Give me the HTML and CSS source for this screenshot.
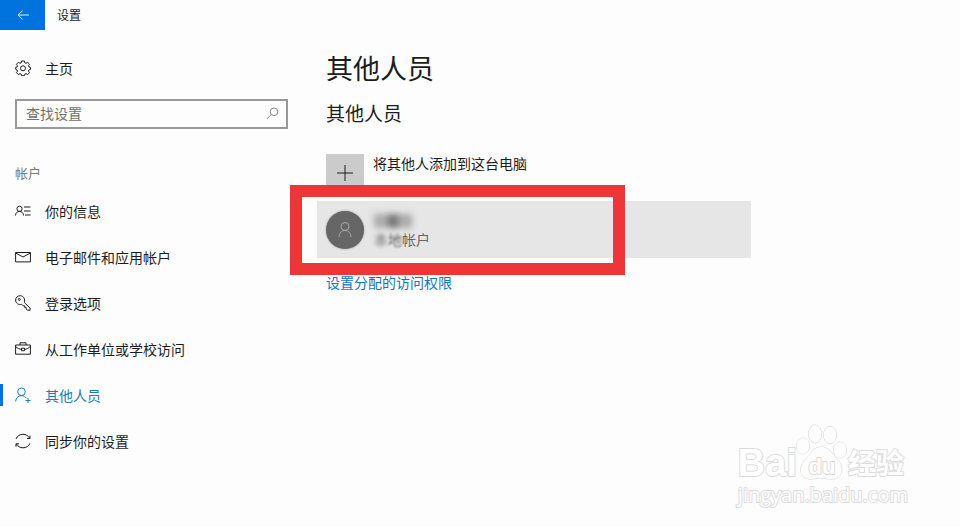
FILE: index.html
```html
<!DOCTYPE html>
<html lang="zh-CN">
<head>
<meta charset="utf-8">
<meta name="viewport" content="width=device-width, initial-scale=1">
<title>设置</title>
<link rel="stylesheet" href="styles.css">
</head>
<body>
<header class="titlebar">
  <button class="back" type="button" aria-label="返回">
    <svg width="14" height="12" viewBox="0 0 14 12"><path d="M13 6H2M6.500 1.500 2 6l4.500 4.500"/></svg>
  </button>
  <span class="window-title">设置</span>
</header>
<div class="layout">
  <aside class="sidebar">
    <a class="nav-item home" href="#">
      <svg class="icon" viewBox="0 0 16 16"><path d="M6.600 1h2.800l.4 1.800 1.200.5 1.600-1 1.900 1.900-1 1.600.5 1.200 1.500.4v1.900l-1.500.6-.5 1.200 1 1.600-1.900 1.900-1.600-1-1.200.5-.4 1.600H6.600l-.4-1.600-1.200-.5-1.600 1-1.900-1.900 1-1.600L2 9.900.7 9.300V7.400L2 7l.5-1.200-1-1.600 1.900-1.900 1.600 1 1.200-.5z"/><circle cx="8" cy="8.300" r="2.500"/></svg>
      <span>主页</span>
    </a>
    <form class="search">
      <input type="search" aria-label="查找设置" placeholder="查找设置">
      <svg width="13" height="13" viewBox="0 0 13 13"><circle cx="8" cy="4.800" r="3.800"/><path d="M5.300 7.500.8 12"/></svg>
    </form>
    <h2 class="group">帐户</h2>
    <nav>
      <a class="nav-item" href="#">
        <svg class="icon" viewBox="0 0 16 16"><circle cx="4.500" cy="5.800" r="2.600"/><path d="M.5 12.500c.2-2.600 1.700-4.100 4-4.100s3.800 1.500 4 4.100M9 4h6.500M9 8h6.500M10 12h5.500"/></svg>
        <span>你的信息</span>
      </a>
      <a class="nav-item" href="#">
        <svg class="icon" viewBox="0 0 16 16"><path d="M.6 3.500h14.800v9.400H.6zM.6 4l7.400 4 7.400-4"/></svg>
        <span>电子邮件和应用帐户</span>
      </a>
      <a class="nav-item" href="#">
        <svg class="icon" viewBox="0 0 16 16"><path d="M9.300 7.500c1.200-3.500-.8-6.600-4-6.800C2.700.6.600 2.600.6 5c0 3.200 3 5.200 6 4.300l1.500 1.500h1.500v1.500h1.500v1.600l1.200 1.300h2.800v-2.100z"/><circle cx="4.300" cy="4.400" r="1"/></svg>
        <span>登录选项</span>
      </a>
      <a class="nav-item" href="#">
        <svg class="icon" viewBox="0 0 16 16"><path d="M.6 4h14.800v9.200H.6zM5 4V1.800h6V4M.6 5.500c2 2 4 2.700 5.900 2.800m3 0c1.900-.1 3.900-.8 5.900-2.800M6.500 7.200h3v2.500h-3z"/></svg>
        <span>从工作单位或学校访问</span>
      </a>
      <a class="nav-item current" href="#" aria-current="page">
        <svg class="icon" viewBox="0 0 16 16"><circle cx="6.500" cy="4.800" r="3.800"/><path d="M.6 14.500C1 10.900 3.200 8.600 6.500 8.600c2.200 0 3.800 1 4.800 2.600M13 11v5M10.500 13.500h5"/></svg>
        <span>其他人员</span>
      </a>
      <a class="nav-item" href="#">
        <svg class="icon" viewBox="0 0 16 16"><path d="M1 6C2.200 3 4.800 1.300 8 1.300c2.900 0 5.300 1.400 6.600 3.900M15 2.500v3h-3M15 10.300c-1.200 2.900-3.800 4.500-7 4.500-2.900 0-5.300-1.400-6.600-3.900M1 13.800v-3h3"/></svg>
        <span>同步你的设置</span>
      </a>
    </nav>
  </aside>
  <main class="content">
    <h1>其他人员</h1>
    <h2 class="section-title">其他人员</h2>
    <button class="add" type="button">
      <span class="plus"><svg width="16" height="16" viewBox="0 0 16 16"><path d="M8 0v16M0 8h16"/></svg></span>
      <span>将其他人添加到这台电脑</span>
    </button>
    <div class="account">
      <span class="avatar"><svg width="16" height="18" viewBox="0 0 16 18"><circle cx="8" cy="5.500" r="4"/><path d="M2 16c.3-4 2.400-6.500 6-6.500s5.700 2.500 6 6.500"/></svg></span>
      <div class="account-text">
        <span class="hidden-name"><i></i><i></i><i></i></span>
        <span class="account-type"><span class="smudge">本</span><span class="half">地</span>帐户</span>
      </div>
      <div class="highlight"></div>
    </div>
    <a class="access-link" href="#">设置分配的访问权限</a>
  </main>
</div>
<div class="watermark">
  <div class="brand">
    <span class="bai">Bai</span>
    <span class="paw">
      <svg width="52" height="56" viewBox="0 0 52 56"><ellipse cx="7" cy="22" rx="6.500" ry="8"/><ellipse cx="19" cy="10" rx="6.500" ry="9"/><ellipse cx="34" cy="11" rx="6.500" ry="8.500"/><ellipse cx="44" cy="26" rx="6.500" ry="8"/><path d="M25 23c-8 0-10 7-15 12-8 7-7 20 5 20 4 0 6-1 10-1s6 1 10 1c12 0 14-12 6-20-6-6-8-12-16-12z"/></svg>
      <span class="du">du</span>
    </span>
    <span class="jingyan">经验</span>
  </div>
  <div class="site">jingyan.baidu.com</div>
</div>
</body>
</html>
```
FILE: styles.css
```css
* { box-sizing: border-box; }

body {
  margin: 0;
  min-height: 100vh;
  position: relative;
  background: #fdfdfd;
  color: #1c1c1c;
  font: 14px/20px "Noto Sans CJK SC", sans-serif;
}

a { color: inherit; text-decoration: none; }
button { border: 0; padding: 0; font: inherit; color: inherit; }
svg { fill: none; stroke: currentColor; flex: none; }
h1, h2 { margin: 0; font-weight: 400; }

.titlebar {
  display: flex;
  align-items: center;
  gap: 12px;
  height: 30px;
  font-size: 12px;
}

.back {
  display: grid;
  place-items: center;
  width: 45px;
  height: 30px;
  background: #0073de;
  color: #d9efff;
}

.layout {
  display: grid;
  grid-template-columns: 288px minmax(0, 1fr);
  column-gap: 38px;
}

.sidebar { padding-top: 15px; }

.nav-item {
  display: flex;
  align-items: center;
  gap: 14px;
  height: 46px;
  padding-left: 15px;
}

.icon { width: 16px; height: 16px; }

.current {
  color: #1d7cb8;
  background: linear-gradient(#0073de, #0073de) left center / 3px 22px no-repeat;
}

.search {
  display: flex;
  align-items: center;
  height: 30px;
  margin: 8px 0 0 15px;
  padding: 0 7px 2px 9px;
  border: 2px solid #999;
  color: #888;
}

.search input {
  flex: 1;
  min-width: 0;
  border: 0;
  padding: 0;
  background: none;
  outline: none;
  font: inherit;
}

.search input::placeholder { color: #707070; }

.group {
  margin: 34px 0 5px 15px;
  color: #7a7a7a;
  font-size: 13px;
  line-height: 20px;
}

.content { padding: 20px 20px 0 0; }

h1 { font-size: 27px; line-height: 36px; }

.section-title {
  margin-top: 15px;
  font-size: 19px;
  line-height: 24px;
}

.add {
  display: flex;
  gap: 9px;
  margin-top: 29px;
  background: none;
  line-height: 18px;
}

.plus {
  display: grid;
  place-items: center;
  width: 38px;
  height: 38px;
  background: #cbcbcb;
}

.account {
  position: relative;
  display: flex;
  align-items: center;
  gap: 10px;
  max-width: 434px;
  height: 57px;
  margin: 9px 0 0 -9px;
  padding-left: 9px;
  background: #e6e6e6;
}

.avatar {
  display: grid;
  place-items: center;
  width: 38px;
  height: 38px;
  border-radius: 50%;
  background: #666;
  color: #aaa;
  box-shadow: 0 0 2px #888;
}

.account-text { display: grid; gap: 1px; }

.hidden-name {
  display: flex;
  gap: 1px;
  height: 18px;
  padding-top: 3px;
  filter: blur(3px);
}

.hidden-name i { width: 12px; height: 14px; background: #aaa; }
.hidden-name i:nth-child(2) { background: #777; }

.account-type {
  font-size: 14px;
  line-height: 18px;
  color: #666;
}

.smudge { filter: blur(2px); display: inline-block; }
.half { filter: blur(1px); display: inline-block; }

.highlight {
  position: absolute;
  inset: -16px 126px -17px -27px;
  border: 12px solid #ee3638;
}

.access-link {
  display: inline-block;
  margin-top: 14px;
  color: #1177bd;
}

.watermark {
  position: absolute;
  right: 52px;
  bottom: 20px;
  color: #fff;
  font-family: "Open Sans", sans-serif;
  -webkit-text-stroke: 2px #dcdcdc;
  paint-order: stroke fill;
  pointer-events: none;
}

.brand {
  display: flex;
  align-items: flex-end;
  height: 56px;
}

.bai { font: 700 38px/34px "Liberation Sans", sans-serif; }

.paw {
  display: grid;
  height: 56px;
  margin-left: -1px;
}

.paw svg { grid-area: 1 / 1; fill: #fdfdfd; stroke: #d4d4d4; }

.du {
  grid-area: 1 / 1;
  place-self: end center;
  font: 700 22px/26px "Liberation Sans", sans-serif;
}

.jingyan {
  padding-bottom: 4px;
  font: 700 28px/28px "Noto Sans CJK SC", sans-serif;
}

.site {
  margin-top: 3px;
  font-size: 20px;
  line-height: 24px;
}
```
